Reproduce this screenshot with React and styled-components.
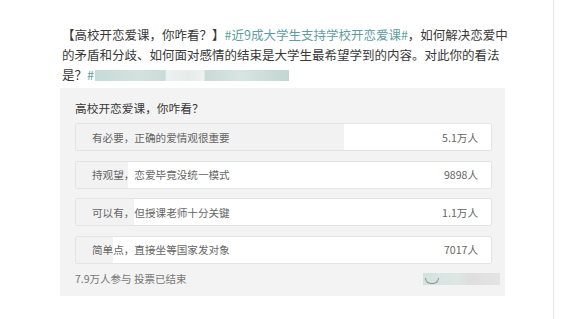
import React from "react";
import styled, { createGlobalStyle } from "styled-components";

const options = [
  { label: "有必要，正确的爱情观很重要", count: "5.1万人", votes: 51000 },
  { label: "持观望，恋爱毕竟没统一模式", count: "9898人", votes: 9898 },
  { label: "可以有，但授课老师十分关键", count: "1.1万人", votes: 11000 },
  { label: "简单点，直接坐等国家发对象", count: "7017人", votes: 7017 },
];
const total = 79000;

function App() {
  return (
    <>
      <GlobalStyle />
      <Page>
        <Text>
          <Line>
            【高校开恋爱课，你咋看？】<Topic>#近9成大学生支持学校开恋爱课#</Topic>，如何解决恋爱中
          </Line>
          <Line>的矛盾和分歧、如何面对感情的结束是大学生最希望学到的内容。对此你的看法</Line>
          <Line>
            是？<Topic>#</Topic>
            <Mosaic />
          </Line>
        </Text>
        <Card>
          <Title>高校开恋爱课，你咋看？</Title>
          <OptionList>
            {options.map((o) => (
              <Option key={o.label}>
                <Fill style={{ width: `${(o.votes / total) * 100}%` }} />
                <Label>{o.label}</Label>
                <Label>{o.count}</Label>
              </Option>
            ))}
          </OptionList>
          <Footer>
            <span>7.9万人参与 投票已结束</span>
            <FooterBlur>
              <Curve />
            </FooterBlur>
          </Footer>
        </Card>
      </Page>
    </>
  );
}

export default App;

const GlobalStyle = createGlobalStyle`
  body {
    margin: 0;
    background: #fff;
    font-family: "Noto Sans CJK SC", "Noto Sans", sans-serif;
  }
`;

const Page = styled.div`
  width: 554px;
  height: 319px;
  box-sizing: border-box;
  border-right: 1px solid #ebebeb;
  padding: 25px 0 0 60px;
`;

const Text = styled.p`
  margin: 0 0 3px 2px;
  font-size: 12.5px;
  line-height: 20px;
  color: #383838;
`;

const Line = styled.span`
  display: block;
  white-space: nowrap;
`;

const Topic = styled.span`
  color: #5e9e9f;
`;

const Mosaic = styled.span`
  display: inline-block;
  width: 194px;
  height: 11px;
  margin-left: 1px;
  vertical-align: -1px;
  background: linear-gradient(
    90deg,
    #c6dbd7 0,
    #d3e2df 22%,
    #cbdcd8 36%,
    #eef2f1 37%,
    #e4ecea 48%,
    #eef2f1 56%,
    #c9dbd7 57%,
    #d8e4e1 75%,
    #c2d6d2 100%
  );
`;

const Card = styled.div`
  width: 445px;
  box-sizing: border-box;
  background: #f3f3f3;
  padding: 10px 13px 7px 15px;
`;

const Title = styled.div`
  font-size: 11.7px;
  line-height: 20px;
  color: #383838;
  margin-bottom: 5px;
`;

const OptionList = styled.div`
  display: flex;
  flex-direction: column;
  gap: 9.5px;
`;

const Option = styled.div`
  position: relative;
  height: 28px;
  box-sizing: border-box;
  border: 1px solid #e4e4e4;
  border-radius: 2px;
  background: #fff;
  display: flex;
  align-items: center;
  justify-content: space-between;
  padding: 0 13px 0 16px;
  overflow: hidden;
`;

const Fill = styled.div`
  position: absolute;
  left: 0;
  top: 0;
  bottom: 0;
  background: #f2f2f2;
`;

const Label = styled.span`
  position: relative;
  font-size: 10.6px;
  color: #666;
`;

const Footer = styled.div`
  display: flex;
  align-items: center;
  justify-content: space-between;
  margin-top: 5px;
  height: 20px;
  font-size: 10.5px;
  color: #777;
`;

const FooterBlur = styled.div`
  position: relative;
  width: 77px;
  height: 12px;
  margin-right: -8px;
  background: linear-gradient(90deg, #d3e2de 0, #dde7e4 45%, #dedede 60%, #e4e4e4 100%);
`;

const Curve = styled.span`
  position: absolute;
  left: 2px;
  bottom: 1px;
  width: 12px;
  height: 5px;
  border: 1px solid #8a9694;
  border-top: none;
  border-radius: 0 0 6px 6px;
`;
